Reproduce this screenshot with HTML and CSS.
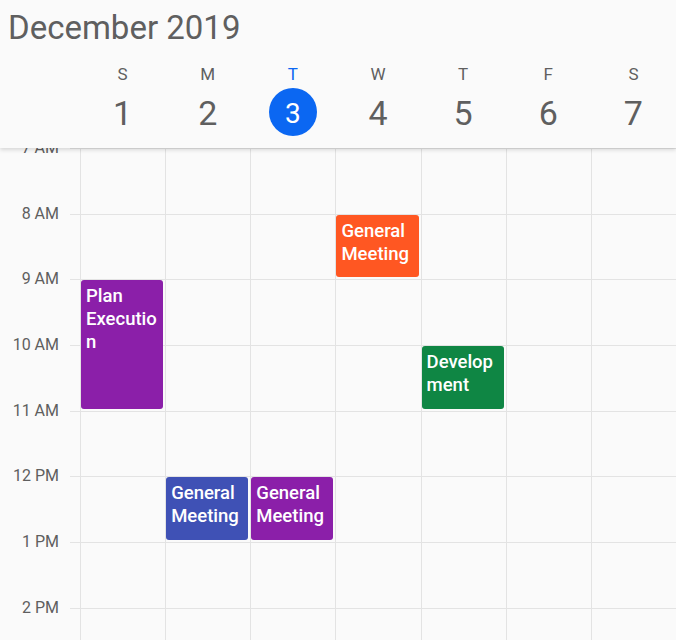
FILE: index.html
```html
<!DOCTYPE html>
<html lang="en">
<head>
<meta charset="utf-8">
<title>Calendar</title>
<link rel="stylesheet" href="styles.css">
</head>
<body>
<div class="app">
  <header class="header">
    <div class="title">December 2019</div>
    <div class="days">
      <div class="day first"><span class="dow">S</span><span class="num">1</span></div>
      <div class="day"><span class="dow">M</span><span class="num">2</span></div>
      <div class="day today"><span class="dow">T</span><span class="num">3</span></div>
      <div class="day"><span class="dow">W</span><span class="num">4</span></div>
      <div class="day"><span class="dow">T</span><span class="num">5</span></div>
      <div class="day"><span class="dow">F</span><span class="num">6</span></div>
      <div class="day"><span class="dow">S</span><span class="num">7</span></div>
    </div>
  </header>
  <main class="board">
    <div class="hline r1"></div>
    <div class="hline r2"></div>
    <div class="hline r3"></div>
    <div class="hline r4"></div>
    <div class="hline r5"></div>
    <div class="hline r6"></div>
    <div class="hline r7"></div>
    <div class="hline r8"></div>

    <div class="vline c1"></div>
    <div class="vline c2"></div>
    <div class="vline c3"></div>
    <div class="vline c4"></div>
    <div class="vline c5"></div>
    <div class="vline c6"></div>
    <div class="vline c7"></div>

    <div class="hour r1"><span>7 AM</span></div>
    <div class="hour r2"><span>8 AM</span></div>
    <div class="hour r3"><span>9 AM</span></div>
    <div class="hour r4"><span>10 AM</span></div>
    <div class="hour r5"><span>11 AM</span></div>
    <div class="hour r6"><span>12 PM</span></div>
    <div class="hour r7"><span>1 PM</span></div>
    <div class="hour r8"><span>2 PM</span></div>

    <div class="event ev-plan">Plan Execution</div>
    <div class="event ev-orange">General Meeting</div>
    <div class="event ev-dev">Development</div>
    <div class="event ev-blue">General Meeting</div>
    <div class="event ev-purple">General Meeting</div>
  </main>
</div>
</body>
</html>
```
FILE: styles.css
```css
* { box-sizing: border-box; }
html, body { margin: 0; padding: 0; }
body {
  background: #fafafa;
  font-family: Roboto, "Noto Sans", sans-serif;
  width: 676px;
  height: 640px;
  overflow: hidden;
}
.app {
  display: flex;
  flex-direction: column;
  height: 640px;
}
.header {
  position: relative;
  z-index: 1;
  flex: 0 0 148px;
  height: 148px;
  background: #fafafa;
  box-shadow: 0 2px 4px rgba(0, 0, 0, 0.14);
  padding-top: 10px;
}
.title {
  margin-left: 8px;
  font-size: 33px;
  line-height: 36px;
  color: #5f5f5f;
}
.days {
  display: grid;
  grid-template-columns: 80px repeat(7, 1fr);
  margin-top: 18px;
}
.day {
  display: flex;
  flex-direction: column;
  align-items: center;
}
.day.first { grid-column: 2; }
.dow {
  font-size: 17px;
  line-height: 20px;
  color: #5f5f5f;
}
.num {
  width: 48px;
  height: 48px;
  margin-top: 4px;
  border-radius: 50%;
  display: flex;
  align-items: center;
  justify-content: center;
  font-size: 34px;
  line-height: 48px;
  padding-top: 2px;
  color: #5f5f5f;
}
.today .dow { color: #0b67f2; }
.today .num {
  background: #0b67f2;
  color: #fff;
  font-size: 28px;
  padding-top: 4px;
}

.board {
  flex: 1;
  min-height: 0;
  overflow: hidden;
  display: grid;
  grid-template-columns: 80px repeat(7, 1fr);
  grid-template-rows: repeat(8, 65.67px);
}
.r1 { grid-row: 1; }
.r2 { grid-row: 2; }
.r3 { grid-row: 3; }
.r4 { grid-row: 4; }
.r5 { grid-row: 5; }
.r6 { grid-row: 6; }
.r7 { grid-row: 7; }
.r8 { grid-row: 8; }
.hline {
  grid-column: 1 / -1;
  margin-left: 70px;
  border-top: 1px solid #e3e3e3;
}
.vline {
  grid-row: 1 / -1;
  border-left: 1px solid #e3e3e3;
}
.c1 { grid-column: 2; }
.c2 { grid-column: 3; }
.c3 { grid-column: 4; }
.c4 { grid-column: 5; }
.c5 { grid-column: 6; }
.c6 { grid-column: 7; }
.c7 { grid-column: 8; }
.hour {
  grid-column: 1;
  text-align: right;
  padding-right: 21px;
}
.hour span {
  display: block;
  font-size: 16px;
  line-height: 20px;
  color: #5f5f5f;
  transform: translateY(-50%);
}
.event {
  margin: 1px 2px 2px 1px;
  border-radius: 3px;
  padding: 5px 2px 0 5px;
  color: #fff;
  font-size: 18.5px;
  font-weight: 500;
  line-height: 23px;
  overflow-wrap: anywhere;
  overflow: hidden;
}
.ev-plan { grid-column: 2; grid-row: 3 / 5; background: #8b1fa9; }
.ev-orange { grid-column: 5; grid-row: 2; background: #ff5722; }
.ev-dev { grid-column: 6; grid-row: 4; background: #0f8644; }
.ev-blue { grid-column: 3; grid-row: 6; background: #3f51b5; }
.ev-purple { grid-column: 4; grid-row: 6; background: #8b1fa9; }
```
